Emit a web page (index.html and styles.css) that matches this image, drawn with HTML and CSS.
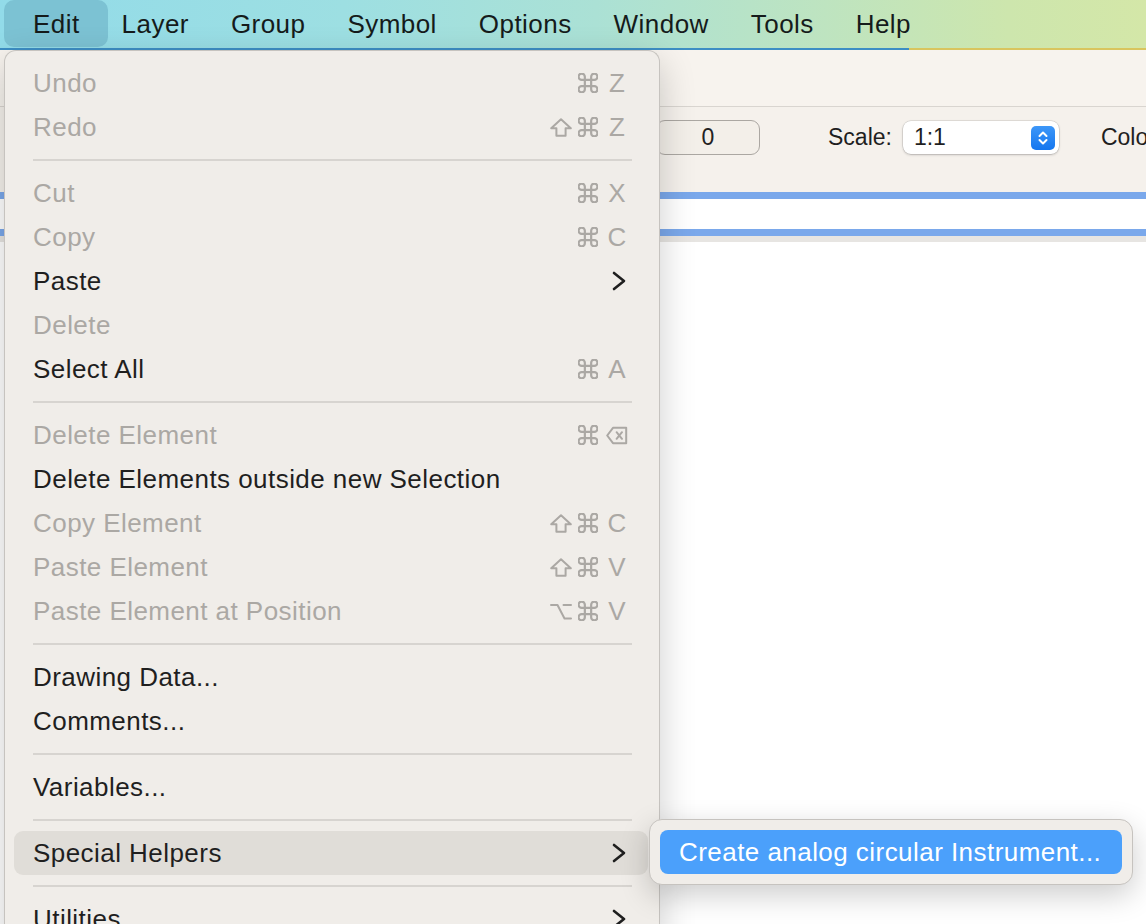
FILE: index.html
```html
<!DOCTYPE html>
<html lang="en">
<head>
<meta charset="utf-8">
<title>Edit menu</title>
<link rel="stylesheet" href="styles.css">
</head>
<body>
<div class="screen">
  <header class="menubar">
    <span class="mb-item active">Edit</span>
    <span class="mb-item">Layer</span>
    <span class="mb-item">Group</span>
    <span class="mb-item">Symbol</span>
    <span class="mb-item">Options</span>
    <span class="mb-item">Window</span>
    <span class="mb-item">Tools</span>
    <span class="mb-item">Help</span>
  </header>

  <main class="app">
    <div class="tb-top"></div>
    <div class="toolbar">
      <div class="num">0</div>
      <span class="label">Scale:</span>
      <div class="select">
        <span>1:1</span>
        <svg class="stepper" width="24" height="24" viewBox="0 0 24 24">
          <defs>
            <linearGradient id="stp" x1="0" y1="0" x2="0" y2="1">
              <stop offset="0" stop-color="#3d97f8"/>
              <stop offset="1" stop-color="#1476ef"/>
            </linearGradient>
          </defs>
          <rect x="0" y="0" width="24" height="24" rx="5" fill="url(#stp)"/>
          <polyline points="8.5,10 12,6.5 15.5,10" fill="none" stroke="#fff" stroke-width="2" stroke-linecap="round" stroke-linejoin="round"/>
          <polyline points="8.5,14 12,17.5 15.5,14" fill="none" stroke="#fff" stroke-width="2" stroke-linecap="round" stroke-linejoin="round"/>
        </svg>
      </div>
      <span class="label label-color">Color:</span>
    </div>
    <div class="table-row"></div>
    <div class="table-gap"></div>
    <div class="canvas"></div>
  </main>

  <nav class="menu">
    <div class="row dis"><span>Undo</span>
      <span class="sc"><span class="mods"><svg class="cmd" width="20" height="20" viewBox="2.5 2.5 19 19"><path d="M15 6v12a3 3 0 1 0 3-3H6a3 3 0 1 0 3 3V6a3 3 0 1 0-3 3h12a3 3 0 1 0-3-3"/></svg></span><span class="key">Z</span></span></div>
    <div class="row dis"><span>Redo</span>
      <span class="sc"><span class="mods"><svg class="mod" width="22" height="19" viewBox="0 0 22 19"><path d="M11 1.2 L20.8 10.2 H15.6 V17.8 H6.4 V10.2 H1.2 Z"/></svg><svg class="cmd" width="20" height="20" viewBox="2.5 2.5 19 19"><path d="M15 6v12a3 3 0 1 0 3-3H6a3 3 0 1 0 3 3V6a3 3 0 1 0-3 3h12a3 3 0 1 0-3-3"/></svg></span><span class="key">Z</span></span></div>
    <div class="sep"></div>
    <div class="row dis"><span>Cut</span>
      <span class="sc"><span class="mods"><svg class="cmd" width="20" height="20" viewBox="2.5 2.5 19 19"><path d="M15 6v12a3 3 0 1 0 3-3H6a3 3 0 1 0 3 3V6a3 3 0 1 0-3 3h12a3 3 0 1 0-3-3"/></svg></span><span class="key">X</span></span></div>
    <div class="row dis"><span>Copy</span>
      <span class="sc"><span class="mods"><svg class="cmd" width="20" height="20" viewBox="2.5 2.5 19 19"><path d="M15 6v12a3 3 0 1 0 3-3H6a3 3 0 1 0 3 3V6a3 3 0 1 0-3 3h12a3 3 0 1 0-3-3"/></svg></span><span class="key">C</span></span></div>
    <div class="row"><span>Paste</span>
      <svg class="chev" width="14" height="20" viewBox="0 0 14 20"><polyline points="2,2 12,10 2,18"/></svg></div>
    <div class="row dis"><span>Delete</span></div>
    <div class="row"><span>Select All</span>
      <span class="sc"><span class="mods"><svg class="cmd" width="20" height="20" viewBox="2.5 2.5 19 19"><path d="M15 6v12a3 3 0 1 0 3-3H6a3 3 0 1 0 3 3V6a3 3 0 1 0-3 3h12a3 3 0 1 0-3-3"/></svg></span><span class="key">A</span></span></div>
    <div class="sep"></div>
    <div class="row dis"><span>Delete Element</span>
      <span class="sc"><span class="mods"><svg class="cmd" width="20" height="20" viewBox="2.5 2.5 19 19"><path d="M15 6v12a3 3 0 1 0 3-3H6a3 3 0 1 0 3 3V6a3 3 0 1 0-3 3h12a3 3 0 1 0-3-3"/></svg></span><span class="key"><svg class="mod" width="22" height="19" viewBox="0 0 22 19"><path d="M7 1.8 H20.2 V17.2 H7 L1.2 9.5 Z"/><path d="M10.6 6.2 L16 12.8 M16 6.2 L10.6 12.8"/></svg></span></span></div>
    <div class="row"><span>Delete Elements outside new Selection</span></div>
    <div class="row dis"><span>Copy Element</span>
      <span class="sc"><span class="mods"><svg class="mod" width="22" height="19" viewBox="0 0 22 19"><path d="M11 1.2 L20.8 10.2 H15.6 V17.8 H6.4 V10.2 H1.2 Z"/></svg><svg class="cmd" width="20" height="20" viewBox="2.5 2.5 19 19"><path d="M15 6v12a3 3 0 1 0 3-3H6a3 3 0 1 0 3 3V6a3 3 0 1 0-3 3h12a3 3 0 1 0-3-3"/></svg></span><span class="key">C</span></span></div>
    <div class="row dis"><span>Paste Element</span>
      <span class="sc"><span class="mods"><svg class="mod" width="22" height="19" viewBox="0 0 22 19"><path d="M11 1.2 L20.8 10.2 H15.6 V17.8 H6.4 V10.2 H1.2 Z"/></svg><svg class="cmd" width="20" height="20" viewBox="2.5 2.5 19 19"><path d="M15 6v12a3 3 0 1 0 3-3H6a3 3 0 1 0 3 3V6a3 3 0 1 0-3 3h12a3 3 0 1 0-3-3"/></svg></span><span class="key">V</span></span></div>
    <div class="row dis"><span>Paste Element at Position</span>
      <span class="sc"><span class="mods"><svg class="mod" width="22" height="19" viewBox="0 0 22 19"><path d="M1 3 H7.5 L14.5 16.5 H21 M13.5 3 H21"/></svg><svg class="cmd" width="20" height="20" viewBox="2.5 2.5 19 19"><path d="M15 6v12a3 3 0 1 0 3-3H6a3 3 0 1 0 3 3V6a3 3 0 1 0-3 3h12a3 3 0 1 0-3-3"/></svg></span><span class="key">V</span></span></div>
    <div class="sep"></div>
    <div class="row"><span>Drawing Data...</span></div>
    <div class="row"><span>Comments...</span></div>
    <div class="sep"></div>
    <div class="row"><span>Variables...</span></div>
    <div class="sep"></div>
    <div class="row hl"><span>Special Helpers</span>
      <svg class="chev" width="14" height="20" viewBox="0 0 14 20"><polyline points="2,2 12,10 2,18"/></svg></div>
    <div class="sep"></div>
    <div class="row"><span>Utilities</span>
      <svg class="chev" width="14" height="20" viewBox="0 0 14 20"><polyline points="2,2 12,10 2,18"/></svg></div>
  </nav>

  <div class="submenu">
    <div class="sub-row">Create analog circular Instrument...</div>
  </div>
</div>
</body>
</html>
```

FILE: styles.css
```css
html, body {
  margin: 0;
  height: 100%;
  overflow: hidden;
}

body {
  font-family: "Liberation Sans", Arial, sans-serif;
  background: #ffffff;
  color: #1f1f1f;
}

.screen {
  position: relative;
  width: 1146px;
  height: 924px;
  overflow: hidden;
  display: flex;
  flex-direction: column;
}

/* ---------- menu bar ---------- */
.menubar {
  position: relative;
  z-index: 0;
  flex: none;
  height: 48px;
  display: flex;
  align-items: center;
  padding-left: 12px;
  background: linear-gradient(90deg, #92dbe9 0%, #9ddfe2 30%, #abe1d5 52%, #bee4c0 72%, #cde6ad 88%, #d4e7a8 100%);
  border-bottom: 2px solid #3f8fc2;
  border-image: linear-gradient(90deg, #3d8ec4 0, #3d8ec4 79.3%, #d9c55e 79.3%, #d9c55e 100%) 1;
}

.mb-item {
  position: relative;
  padding: 0 21px;
  font-size: 26px;
  letter-spacing: 0.45px;
  line-height: 48px;
  color: #151b1b;
}

.mb-item.active::before {
  content: "";
  position: absolute;
  left: -8px;
  right: -7px;
  top: 0;
  bottom: 1px;
  background: #7cc2d3;
  border-radius: 10px;
  z-index: -1;
}

/* ---------- background app ---------- */
.app {
  flex: 1;
  display: flex;
  flex-direction: column;
  background: #ffffff;
}

.tb-top {
  flex: none;
  height: 56px;
  background: #f7f3ee;
  border-bottom: 1px solid #d9d5d0;
}

.toolbar {
  flex: none;
  height: 85px;
  box-sizing: border-box;
  padding: 13px 0 0 656px;
  display: flex;
  align-items: flex-start;
  white-space: nowrap;
  background: #f5f1ec;
}

.num {
  flex: none;
  width: 104px;
  height: 35px;
  box-sizing: border-box;
  border: 1.5px solid #aba7a2;
  border-radius: 9px;
  background: #f3efe9;
  font-size: 23px;
  line-height: 32px;
  text-align: center;
  color: #222;
}

.label {
  margin-left: 68px;
  font-size: 23px;
  line-height: 35px;
  color: #1f1f1f;
}

.label-color {
  margin-left: 42px;
}

.select {
  flex: none;
  margin: 1px 0 0 11px;
  width: 156px;
  height: 33px;
  box-sizing: border-box;
  display: flex;
  align-items: center;
  padding: 0 4px 0 11px;
  background: #ffffff;
  border-radius: 8px;
  box-shadow: 0 0 0 0.5px rgba(0, 0, 0, 0.16), 0 1px 2.5px rgba(0, 0, 0, 0.2);
  font-size: 23px;
  color: #1f1f1f;
}

.stepper {
  margin-left: auto;
  display: block;
}

.table-row {
  flex: none;
  height: 30px;
  background: #ffffff;
  border-top: 7px solid #7aa8eb;
  border-bottom: 7px solid #7aa8eb;
}

.table-gap {
  flex: none;
  height: 6px;
  background: #e7e5e2;
}

.canvas {
  flex: 1;
  background: #ffffff;
}

/* ---------- dropdown menu ---------- */
.menu {
  position: absolute;
  left: 4px;
  top: 50px;
  width: 656px;
  height: 900px;
  box-sizing: border-box;
  padding: 10px 11px 0 9px;
  background: #f0ede9;
  border: 1px solid #c6c3bf;
  border-bottom: none;
  border-radius: 12px 12px 0 0;
  box-shadow: 0 12px 36px rgba(0, 0, 0, 0.2);
}

.row {
  height: 44px;
  display: flex;
  align-items: center;
  padding: 0 20px 0 19px;
  border-radius: 9px;
  font-size: 26px;
  letter-spacing: 0.45px;
  color: #1f1f1f;
  white-space: nowrap;
}

.row.dis {
  color: #aba8a4;
}

.row.hl {
  background: #e0ddd8;
}

.sep {
  height: 2px;
  margin: 10px 16px 10px 19px;
  background: #d7d4d0;
}

.sc {
  margin-left: auto;
  display: flex;
  align-items: center;
  gap: 8px;
  color: #aba8a4;
}

.mods {
  display: flex;
  align-items: center;
  gap: 6px;
}

.key {
  width: 22px;
  display: flex;
  justify-content: center;
  align-items: center;
  letter-spacing: 0;
}

.cmd, .mod {
  display: block;
  fill: none;
  stroke: #aba8a4;
  stroke-width: 2;
  stroke-linecap: round;
  stroke-linejoin: round;
}

.cmd path {
  stroke-width: 2.1;
}

.chev {
  margin-left: auto;
  margin-right: 2px;
  display: block;
  fill: none;
  stroke: #1f1f1f;
  stroke-width: 2.6;
  stroke-linecap: round;
  stroke-linejoin: round;
}

/* ---------- submenu ---------- */
.submenu {
  position: absolute;
  left: 649px;
  top: 819px;
  width: 484px;
  box-sizing: border-box;
  padding: 10px;
  background: #f0ede9;
  border: 1px solid #c6c3bf;
  border-radius: 13px;
  box-shadow: 0 10px 30px rgba(0, 0, 0, 0.2);
}

.sub-row {
  height: 44px;
  display: flex;
  align-items: center;
  padding-left: 19px;
  border-radius: 8px;
  background: #4ba0fb;
  color: #ffffff;
  font-size: 26px;
  letter-spacing: 0.45px;
  white-space: nowrap;
}
```
